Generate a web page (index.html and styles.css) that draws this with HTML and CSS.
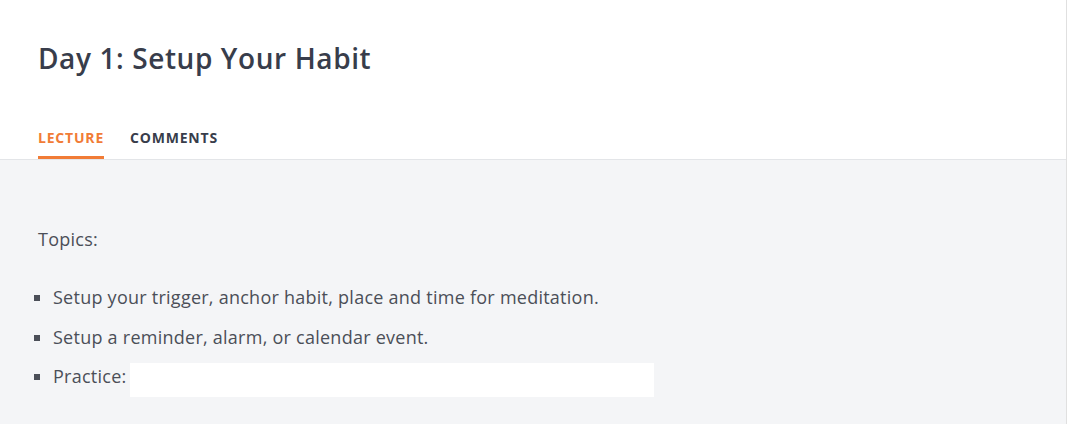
FILE: index.html
```html
<!DOCTYPE html>
<html>
<head>
<meta charset="utf-8">
<link rel="stylesheet" href="styles.css">
</head>
<body>
<div class="page">
  <header class="header">
    <h1 class="title">Day 1: Setup Your Habit</h1>
    <nav class="tabs">
      <span class="tab active">LECTURE</span>
      <span class="tab">COMMENTS</span>
    </nav>
  </header>
  <main class="content">
    <p class="topics">Topics:</p>
    <ul class="list">
      <li>Setup your trigger, anchor habit, place and time for meditation.</li>
      <li>Setup a reminder, alarm, or calendar event.</li>
      <li>Practice:<span class="embed"></span></li>
    </ul>
  </main>
</div>
</body>
</html>
```
FILE: styles.css
```css
html, body {
  margin: 0;
  padding: 0;
  height: 100%;
}
body {
  font-family: "Open Sans", "Lato", sans-serif;
  background: #f4f5f7;
  overflow: hidden;
}
.page {
  width: 1066px;
  height: 424px;
  border-right: 1px solid #e0e0e0;
  background: #f4f5f7;
}
.header {
  background: #fff;
  border-bottom: 1px solid #e3e5e8;
  padding: 0 38px;
}
.title {
  margin: 0;
  padding-top: 40px;
  height: 76px;
  font-size: 28px;
  font-weight: 600;
  letter-spacing: 0.6px;
  color: #383d4b;
  line-height: 36px;
}
.tabs {
  display: flex;
  gap: 26px;
  height: 43px;
  align-items: stretch;
}
.tab {
  font-size: 14px;
  font-weight: 700;
  letter-spacing: 0.8px;
  color: #383d4b;
  padding-top: 12px;
  box-sizing: border-box;
}
.tab.active {
  color: #f17c36;
  border-bottom: 3px solid #f17c36;
}
.content {
  padding: 67px 38px 0;
  color: #4b4f58;
  font-size: 18px;
  letter-spacing: 0.25px;
}
.topics {
  margin: 0 0 34px;
  line-height: 24px;
}
.list {
  margin: 0;
  padding: 0 0 0 15px;
  list-style: square;
}
.list li {
  line-height: 24px;
  margin-bottom: 15.5px;
}
.embed {
  display: inline-block;
  vertical-align: top;
  width: 524px;
  height: 34px;
  margin: -1px 0 -9px 4px;
  background: #fff;
}
```
